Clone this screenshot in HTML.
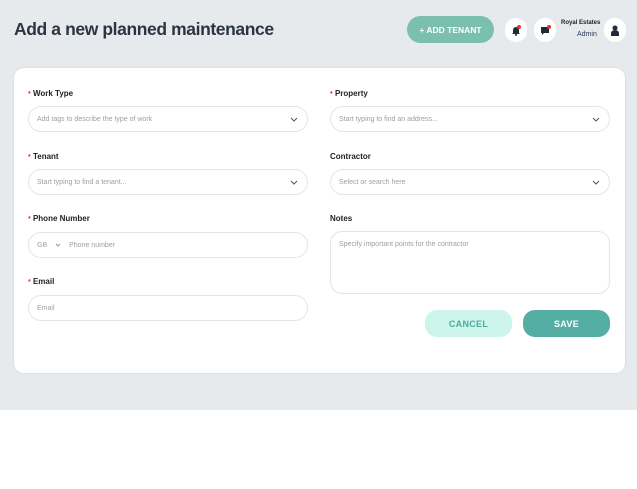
<!DOCTYPE html>
<html><head><style>
*{box-sizing:border-box;margin:0;padding:0}
body{width:637px;height:489px;background:#fff;font-family:"Liberation Sans",sans-serif;position:relative;overflow:hidden}
.bg{position:absolute;left:0;top:0;width:637px;height:410px;background:#e6eaed}
h1{position:absolute;left:14px;top:19px;font-size:17.5px;letter-spacing:-0.4px;font-weight:bold;color:#2b3440}
.add{position:absolute;left:407px;top:16px;width:87px;height:27px;border-radius:14px;background:#7bbfb0;color:#fff;font-size:8.5px;font-weight:bold;display:flex;align-items:center;justify-content:center}
.circ{position:absolute;top:18px;width:22px;height:24px;border-radius:11px;background:#fff;display:flex;align-items:center;justify-content:center}
.card{position:absolute;left:14px;top:68px;width:611px;height:305px;background:#fff;border-radius:10px;box-shadow:0 0 2px #cfd4d8}
.lbl{position:absolute;font-size:8px;font-weight:bold;color:#222}
.lbl b{color:#e03030;font-size:7px}
.f{position:absolute;width:280px;height:26px;border:1px solid #e3e5e8;border-radius:13px;font-size:7px;color:#9aa0a6;padding-left:8px;display:flex;align-items:center}
.f svg{position:absolute;right:9px;top:10px}
.btn{position:absolute;top:310px;width:87px;height:27px;border-radius:12px;font-size:9px;font-weight:bold;display:flex;align-items:center;justify-content:center;letter-spacing:.3px}
</style></head><body>
<div class="bg"></div>
<h1>Add a new planned maintenance</h1>
<div class="add">+ ADD TENANT</div>
<div class="circ" style="left:505px"><svg width="10" height="11" viewBox="0 0 10 11"><path d="M2 8V5a3 3 0 0 1 6 0v3l1 1H1z" fill="#1f2a3a"/><circle cx="5" cy="10" r="1" fill="#1f2a3a"/><circle cx="8" cy="2" r="2" fill="#e53030"/></svg></div>
<div class="circ" style="left:534px"><svg width="11" height="11" viewBox="0 0 11 11"><path d="M1 2h8v6H4l-2 2V8H1z" fill="#1f2a3a"/><circle cx="9" cy="2" r="2" fill="#e53030"/></svg></div>
<div style="position:absolute;left:561px;top:20px;font-size:6px;font-weight:bold;color:#222">Royal Estates</div>
<div style="position:absolute;left:577px;top:31px;font-size:7px;color:#2b3a5a">Admin</div>
<div class="circ" style="left:604px"><svg width="10" height="11" viewBox="0 0 10 11"><circle cx="5" cy="3" r="2.5" fill="#1f2a3a"/><path d="M1 11V8a4 3 0 0 1 8 0v3z" fill="#1f2a3a"/></svg></div>
<div class="card"></div>
<div class="lbl" style="left:28px;top:89px"><b>*</b> Work Type</div>
<div class="f" style="left:28px;top:106px">Add tags to describe the type of work<svg width="8" height="5"><path d="M1 1l3 3 3-3" stroke="#555" fill="none"/></svg></div>
<div class="lbl" style="left:28px;top:152px"><b>*</b> Tenant</div>
<div class="f" style="left:28px;top:169px">Start typing to find a tenant...<svg width="8" height="5"><path d="M1 1l3 3 3-3" stroke="#555" fill="none"/></svg></div>
<div class="lbl" style="left:28px;top:214px"><b>*</b> Phone Number</div>
<div class="f" style="left:28px;top:232px">GB <svg width="6" height="4" style="position:static;margin:0 8px 0 8px"><path d="M1 1l2 2 2-2" stroke="#999" fill="none"/></svg>Phone number</div>
<div class="lbl" style="left:28px;top:277px"><b>*</b> Email</div>
<div class="f" style="left:28px;top:295px">Email</div>
<div class="lbl" style="left:330px;top:89px"><b>*</b> Property</div>
<div class="f" style="left:330px;top:106px">Start typing to find an address...<svg width="8" height="5"><path d="M1 1l3 3 3-3" stroke="#555" fill="none"/></svg></div>
<div class="lbl" style="left:330px;top:152px">Contractor</div>
<div class="f" style="left:330px;top:169px">Select or search here<svg width="8" height="5"><path d="M1 1l3 3 3-3" stroke="#555" fill="none"/></svg></div>
<div class="lbl" style="left:330px;top:214px">Notes</div>
<div class="f" style="left:330px;top:231px;height:63px;align-items:flex-start;padding-top:9px;border-radius:12px">Specify important points for the contractor</div>
<div class="btn" style="left:425px;background:#cef5ec;color:#4ea99c">CANCEL</div>
<div class="btn" style="left:523px;background:#55aea3;color:#fff">SAVE</div>
</body></html>
